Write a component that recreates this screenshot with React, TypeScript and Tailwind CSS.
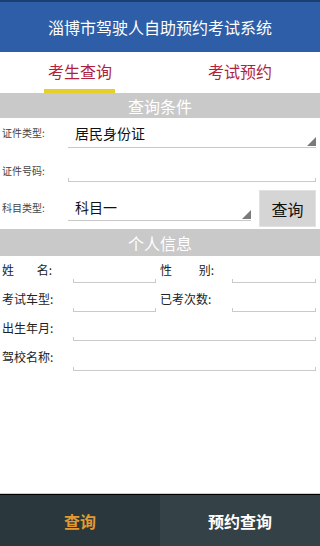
import React from "react";

const Tri = () => (
  <svg className="absolute right-0 bottom-[1px]" width="9" height="9" viewBox="0 0 9 9">
    <polygon points="9,0 9,9 0,9" fill="#7a7a7a" />
  </svg>
);

const Line = () => (
  <div className="h-[4px] w-full border-x border-b border-[#cacaca]" />
);

export default function App() {
  return (
    <div
      className="w-[320px] h-[546px] flex flex-col bg-white overflow-hidden"
      style={{ fontFamily: '"Noto Sans CJK SC", "Noto Sans", sans-serif' }}
    >
      {/* header */}
      <div className="h-[52px] border-t-2 border-[#1c3f73] bg-[#2d5ea7] flex items-center justify-center">
        <span className="text-white text-[16px] leading-none">淄博市驾驶人自助预约考试系统</span>
      </div>

      {/* tabs */}
      <div className="h-[41px] flex">
        <div className="w-1/2 relative flex items-center justify-center pb-[4px]">
          <span className="text-[16px] text-[#b11f3f] leading-none">考生查询</span>
          <div className="absolute bottom-0 left-[44px] w-[71px] h-[4px] bg-[#e6cf2a]" />
        </div>
        <div className="w-1/2 flex items-center justify-center pb-[4px]">
          <span className="text-[16px] text-[#b11f3f] leading-none">考试预约</span>
        </div>
      </div>

      {/* section 1 */}
      <div className="h-[25px] bg-[#c9c9c9] flex items-center justify-center">
        <span className="text-white text-[16px] leading-none">查询条件</span>
      </div>

      {/* row 1 */}
      <div className="flex h-[36px] pt-[4px]">
        <div className="w-[68px] pl-[2px] text-[10px] text-[#444] leading-[22px]">证件类型:</div>
        <div className="flex-1 mr-[4px] h-[26px] border-b border-[#c8c8c8] relative pl-[7px] text-[14px] text-[#111] leading-[22px]">
          居民身份证
          <Tri />
        </div>
      </div>

      {/* row 2 */}
      <div className="flex h-[34px]">
        <div className="w-[68px] pl-[2px] text-[10px] text-[#444] leading-[34px]">证件号码:</div>
        <div className="flex-1 mr-[4px] h-[28px] flex items-end">
          <Line />
        </div>
      </div>

      {/* row 3 */}
      <div className="flex h-[41px]">
        <div className="w-[68px] pl-[2px] text-[10px] text-[#444] leading-[40px]">科目类型:</div>
        <div className="w-[183px] mt-[7px] h-[26px] border-b border-[#c8c8c8] relative pl-[7px] text-[14px] text-[#111] leading-[24px]">
          科目一
          <Tri />
        </div>
        <div className="ml-[8px] mr-[4px] mt-[2px] flex-1 h-[37px] bg-[#d5d5d5] border border-[#e2e2e2] flex items-center justify-center text-[16px] text-[#111]">
          查询
        </div>
      </div>

      {/* section 2 */}
      <div className="h-[27px] bg-[#c9c9c9] flex items-center justify-center">
        <span className="text-white text-[16px] leading-none">个人信息</span>
      </div>

      {/* personal rows */}
      <div className="flex h-[29px] text-[12px] text-[#222]">
        <div className="w-[73px] pl-[2px] leading-[28px]">
          <span className="flex w-[50px] justify-between">
            <span>姓</span>
            <span>名:</span>
          </span>
        </div>
        <div className="w-[83px] h-[27px] flex items-end"><Line /></div>
        <div className="w-[72px] ml-[4px] leading-[28px]">
          <span className="flex w-[54px] justify-between">
            <span>性</span>
            <span>别:</span>
          </span>
        </div>
        <div className="flex-1 mr-[4px] h-[27px] flex items-end"><Line /></div>
      </div>

      <div className="flex h-[29px] text-[12px] text-[#222]">
        <div className="w-[73px] pl-[2px] leading-[28px]">考试车型:</div>
        <div className="w-[83px] h-[27px] flex items-end"><Line /></div>
        <div className="w-[72px] ml-[4px] leading-[28px]">已考次数:</div>
        <div className="flex-1 mr-[4px] h-[27px] flex items-end"><Line /></div>
      </div>

      <div className="flex h-[29px] text-[12px] text-[#222]">
        <div className="w-[73px] pl-[2px] leading-[28px]">出生年月:</div>
        <div className="flex-1 mr-[4px] h-[27px] flex items-end"><Line /></div>
      </div>

      <div className="flex h-[30px] text-[12px] text-[#222]">
        <div className="w-[73px] pl-[2px] leading-[28px]">驾校名称:</div>
        <div className="flex-1 mr-[4px] h-[28px] flex items-end"><Line /></div>
      </div>

      <div className="flex-1" />

      {/* bottom nav */}
      <div className="border-t border-[#c9cfd2]">
        <div className="border-t border-black h-[52px] flex">
          <div className="w-1/2 bg-[#2a373c] flex items-center justify-center">
            <span className="text-[16px] font-bold text-[#e39a2e] leading-none">查询</span>
          </div>
          <div className="w-1/2 bg-[#344248] flex items-center justify-center">
            <span className="text-[16px] font-bold text-white leading-none">预约查询</span>
          </div>
        </div>
      </div>
    </div>
  );
}
